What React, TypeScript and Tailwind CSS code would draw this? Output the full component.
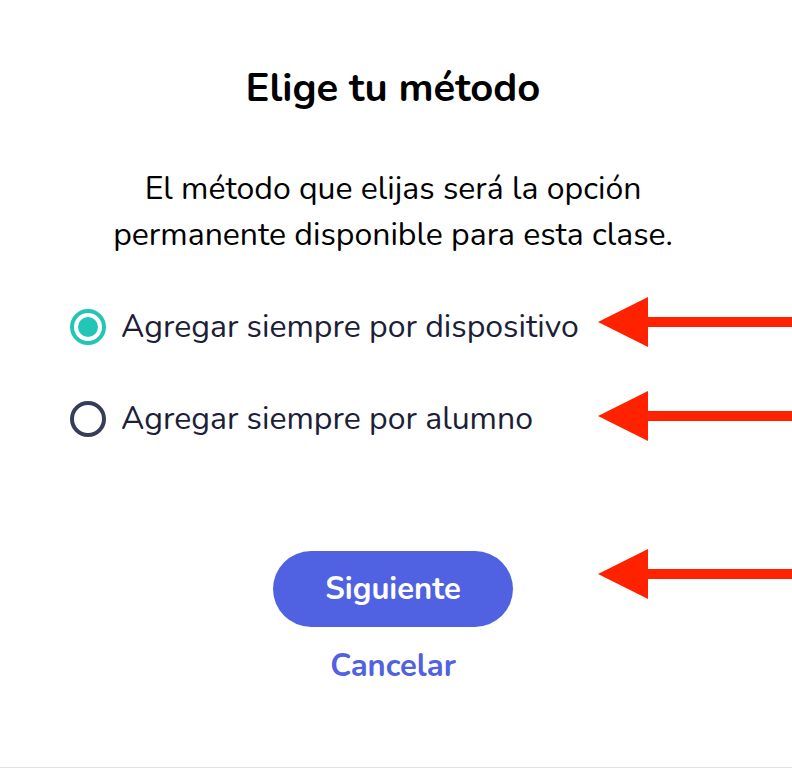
import React from "react";

const Arrow = ({ top }: { top: number }) => (
  <svg
    className="absolute left-[598px]"
    style={{ top }}
    width="194"
    height="50"
    viewBox="0 0 194 50"
  >
    <rect x="48" y="20" width="146" height="10" fill="#ff2200" />
    <polygon points="0,25 50,0 50,50" fill="#ff2200" />
  </svg>
);

const Radio = ({ checked, label }: { checked?: boolean; label: string }) => (
  <label className="flex h-10 items-center gap-[15px]">
    {checked ? (
      <span className="flex h-9 w-9 items-center justify-center rounded-full border-4 border-[#22c5b6]">
        <span className="h-[20px] w-[20px] rounded-full bg-[#22c5b6]" />
      </span>
    ) : (
      <span className="h-9 w-9 rounded-full border-4 border-[#363d58]" />
    )}
    <span className="text-[32px] leading-10 text-[#1b2037]">{label}</span>
  </label>
);

export default function App() {
  return (
    <div className="relative h-[768px] w-full border-b border-[#e2e2ea] bg-white font-['Nunito','Open_Sans',sans-serif]">
      <div className="flex flex-col items-center pr-[6px]">
        <h1 className="mt-[64px] text-[40px] leading-[48px] font-bold text-black">
          Elige tu método
        </h1>
        <p className="mt-[54px] text-center text-[32px] leading-[46px] text-black">
          El método que elijas será la opción
          <br />
          permanente disponible para esta clase.
        </p>
      </div>

      <div className="mt-[49px] flex flex-col gap-[52px] pl-[70px]">
        <Radio checked label="Agregar siempre por dispositivo" />
        <Radio label="Agregar siempre por alumno" />
      </div>

      <div className="mt-[112px] flex flex-col items-center pr-[6px]">
        <button className="h-[76px] w-[240px] rounded-full bg-[#5062e1] text-[31px] font-bold text-white">
          Siguiente
        </button>
        <button className="mt-[19px] text-[31px] leading-[40px] font-bold text-[#5062e1]">
          Cancelar
        </button>
      </div>

      <Arrow top={297} />
      <Arrow top={391} />
      <Arrow top={549} />
    </div>
  );
}
